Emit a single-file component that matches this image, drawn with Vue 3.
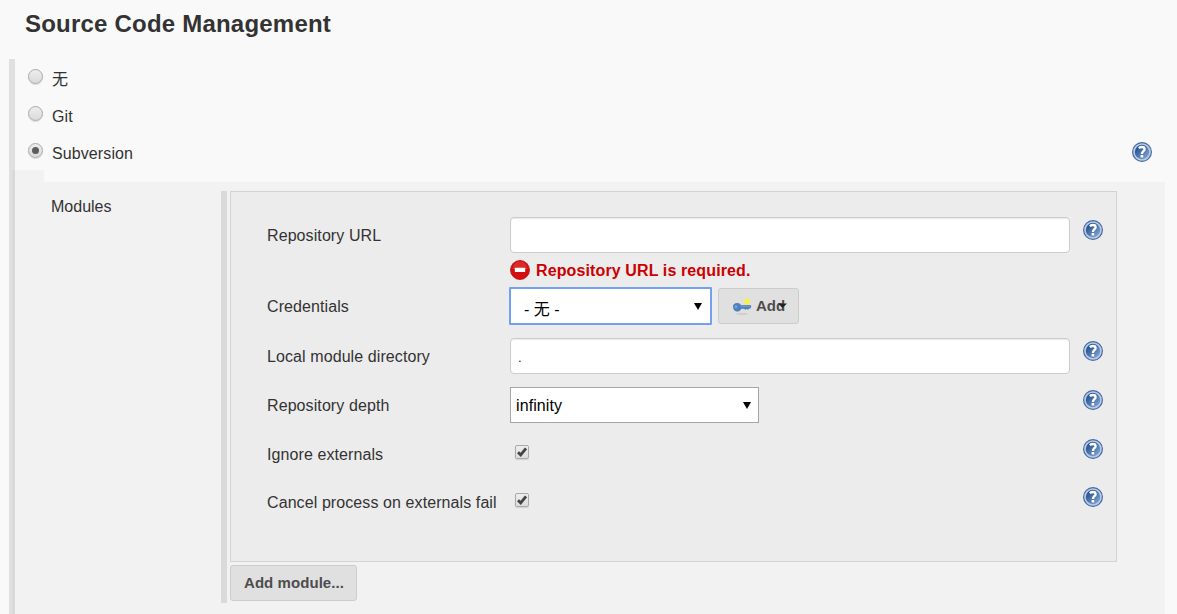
<script setup>
import { h } from 'vue'

const HelpIcon = () =>
  h('svg', { width: 20, height: 20, viewBox: '0 0 20 20' }, [
    h('defs', [
      h('linearGradient', { id: 'helpFill', x1: 0, y1: 0, x2: 1, y2: 1 }, [
        h('stop', { offset: '0.15', 'stop-color': '#234f90' }),
        h('stop', { offset: '0.9', 'stop-color': '#7fa3d3' })
      ])
    ]),
    h('circle', { cx: 10, cy: 10, r: 9.4, fill: '#bccbe2', stroke: '#466ca5', 'stroke-width': 1.2 }),
    h('circle', { cx: 10, cy: 10, r: 7.2, fill: 'url(#helpFill)' }),
    h('path', { d: 'M6.800 6.200C7.800 5.300 8.800 5 10 5c1.700 0 2.600.9 2.600 2.200 0 1.900-2.700 2.200-2.700 4.700', fill: 'none', stroke: '#fff', 'stroke-width': 2.3 }),
    h('rect', { x: 8.6, y: 13, width: 2.6, height: 2.5, fill: '#fff' })
  ])

const sources = [
  { label: '无', checked: false },
  { label: 'Git', checked: false },
  { label: 'Subversion', checked: true, help: true }
]

const rows = [
  { label: 'Repository URL', type: 'text', value: '', error: 'Repository URL is required.', help: true },
  { label: 'Credentials', type: 'credentials' },
  { label: 'Local module directory', type: 'text', value: '.', help: true },
  { label: 'Repository depth', type: 'select', value: 'infinity', help: true },
  { label: 'Ignore externals', type: 'check', help: true },
  { label: 'Cancel process on externals fail', type: 'check', help: true }
]
</script>

<template>
  <main class="page">
    <h1>Source Code Management</h1>
    <section class="scm">
      <div v-for="s in sources" :key="s.label" class="source">
        <span class="radio" :class="{ on: s.checked }"></span>
        <span class="name">{{ s.label }}</span>
        <HelpIcon v-if="s.help" class="help" />
      </div>
      <div class="nested">
        <div class="notch"></div>
        <div class="body">
          <div class="modules">Modules</div>
          <div class="repeat">
            <div class="panel">
              <template v-for="r in rows" :key="r.label">
                <div class="row" :class="'row-' + r.type">
                  <span class="label">{{ r.label }}</span>
                  <div class="field">
                    <div v-if="r.type === 'text'" class="input">{{ r.value }}</div>
                    <template v-else-if="r.type === 'credentials'">
                      <div class="select focus">
                        <span>- 无 -</span>
                        <svg class="arrow" width="8" height="7" viewBox="0 0 8 7"><path d="M0 0h8L4 7z" /></svg>
                      </div>
                      <div class="button add">
                        <svg width="20" height="20" viewBox="0 0 20 20">
                          <ellipse cx="10" cy="18" rx="6.500" ry="1.200" fill="#cfcfcf" />
                          <circle cx="15" cy="5.500" r="3.300" fill="#f2ec7c" />
                          <path d="M15 2l.9 2.400 2.500.2-1.900 1.700.8 2.300-2.300-1.100-2.200 1.100.7-2.300-1.900-1.700 2.500-.2z" fill="#f8ef4a" />
                          <path d="M1 10.500C1 8 3 6.800 5.500 7c1.700.1 2.800.8 3.400 1.900h9.600l.8 1.700-.9 1.900h-1.300l-1 1.400-1.300-1.200-1.300 1.200-1.300-1.200H9.300c-.8 2-2.400 3-4.600 2.800C2.400 15.300 1 13.200 1 10.500z" fill="#4f80bb" />
                          <path d="M8.500 10.200H18" stroke="#7ba3d3" />
                          <ellipse cx="4" cy="10.800" rx="1.500" ry="1.700" fill="#74a0d3" />
                        </svg>
                        <span>Add</span>
                        <svg class="caret" width="9" height="5" viewBox="0 0 9 5"><path d="M0 .5h9L4.500 5z" /></svg>
                      </div>
                    </template>
                    <div v-else-if="r.type === 'select'" class="select depth">
                      <span>{{ r.value }}</span>
                      <svg class="arrow" width="8" height="7" viewBox="0 0 8 7"><path d="M0 0h8L4 7z" /></svg>
                    </div>
                    <span v-else class="checkbox">
                      <svg width="12" height="12" viewBox="0 0 12 12"><path d="M2 6.200l2.700 2.700L10 2.300" fill="none" stroke="#444" stroke-width="2.800" /></svg>
                    </span>
                  </div>
                  <HelpIcon v-if="r.help" class="help" />
                </div>
                <div v-if="r.error" class="error">
                  <svg width="20" height="20" viewBox="0 0 20 20">
                    <circle cx="10" cy="10" r="9.500" fill="#d40d0d" stroke="#b72020" stroke-width=".9" />
                    <path d="M2.500 9a7.500 7.500 0 0 1 15 0z" fill="#e64b4b" opacity=".45" />
                    <rect x="4.800" y="7.800" width="10.400" height="4.200" rx=".5" fill="#fff" />
                  </svg>
                  <span>{{ r.error }}</span>
                </div>
              </template>
            </div>
            <div class="button more">Add module...</div>
          </div>
        </div>
      </div>
    </section>
  </main>
</template>

<style>
body { background: #f9f9f9; overflow: hidden; }
</style>

<style scoped>
* { box-sizing: border-box; }
.page {
  display: flex;
  flex-direction: column;
  height: 614px;
  overflow: hidden;
  background: #f9f9f9;
  color: #333;
  font: 16px/20px "Liberation Sans", "Noto Sans CJK SC", sans-serif;
}
svg { display: block; flex: none; }
h1 {
  margin: 0;
  height: 59px;
  padding: 9px 0 0 25px;
  font-size: 24px;
  line-height: 30px;
  letter-spacing: 0.21px;
}
.scm {
  flex: 1;
  margin-left: 9px;
  border-left: 6px solid #e0e0e0;
}
.source {
  display: flex;
  align-items: center;
  height: 37px;
  padding: 0 25px 0 13px;
}
.radio {
  display: grid;
  place-items: center;
  width: 15px;
  height: 15px;
  margin: 0 9px 2px 0;
  border: 1px solid #aaa;
  border-radius: 50%;
  background: linear-gradient(#ededed, #dadada);
  box-shadow: 0 1px 1px rgba(0, 0, 0, 0.12);
}
.radio.on::after {
  content: "";
  width: 7px;
  height: 7px;
  border-radius: 50%;
  background: #5c5c5c;
}
.name { flex: 1; padding-top: 4px; letter-spacing: 0.1px; }
.nested { width: 1153px; margin-left: -3px; }
.notch { width: 32px; height: 12px; background: rgba(0, 0, 0, 0.027); }
.body {
  display: flex;
  height: 432px;
  background: rgba(0, 0, 0, 0.027);
}
.modules { width: 209px; padding: 15px 0 0 39px; }
.repeat {
  width: 896px;
  height: 412px;
  margin-top: 9px;
  padding-left: 3px;
  border-left: 6px solid #dadada;
}
.panel {
  width: 887px;
  height: 371px;
  margin-bottom: 3px;
  padding: 25px 0 0 36px;
  border: 1px solid #d3d3d3;
  background: #ececec;
}
.row { display: flex; align-items: center; height: 36px; margin-bottom: 13px; }
.row:first-child { margin-bottom: 0; }
.row-credentials { height: 38px; }
.row-check { margin-bottom: 12px; }
.label { flex: none; width: 243px; padding-top: 2px; white-space: nowrap; letter-spacing: 0.09px; }
.field { display: flex; flex: none; align-items: center; width: 573px; }
.row .help { margin-bottom: 10px; }
.input {
  width: 560px;
  height: 36px;
  padding: 9px 7px;
  border: 1px solid #ccc;
  border-radius: 4px;
  background: #fff;
  box-shadow: inset 0 1px 1px rgba(0, 0, 0, 0.08);
  color: #222;
  font-size: 13px;
}
.error {
  display: flex;
  align-items: center;
  gap: 6px;
  height: 34px;
  padding-left: 243px;
  color: #c00;
  font-weight: bold;
  letter-spacing: 0.12px;
}
.error span { padding-top: 2px; }
.select {
  display: flex;
  align-items: center;
  justify-content: space-between;
  background: #fff;
  color: #000;
}
.focus {
  width: 203px;
  height: 38px;
  margin: 0 6px 0 -1px;
  padding: 6px 8px 0 13px;
  border: 2px solid #72a1ee;
  border-radius: 1px;
}
.focus span { padding-top: 2px; }
.focus .arrow { margin-bottom: 6px; }
.depth { width: 249px; height: 36px; padding: 0 7px 0 5px; border: 1px solid #a6a6a6; }
.depth span { padding-top: 2px; letter-spacing: 0.1px; }
.button {
  display: flex;
  align-items: center;
  height: 36px;
  border: 1px solid #ccc;
  border-radius: 3px;
  background: #e0e0e0;
  color: #4d4d4d;
  font-size: 15px;
  font-weight: bold;
}
.add { width: 81px; padding-left: 13px; }
.add span { margin-left: 4px; }
.caret { margin: 0 0 2px -7px; fill: #222; }
.more { width: 127px; padding-left: 13px; letter-spacing: 0.06px; }
.checkbox {
  width: 14px;
  height: 14px;
  margin: 0 0 4px 5px;
  border: 1px solid #aaa;
  border-radius: 2px;
  background: linear-gradient(#eee, #dcdcdc);
  box-shadow: 0 1px 1px rgba(0, 0, 0, 0.12);
}
</style>
